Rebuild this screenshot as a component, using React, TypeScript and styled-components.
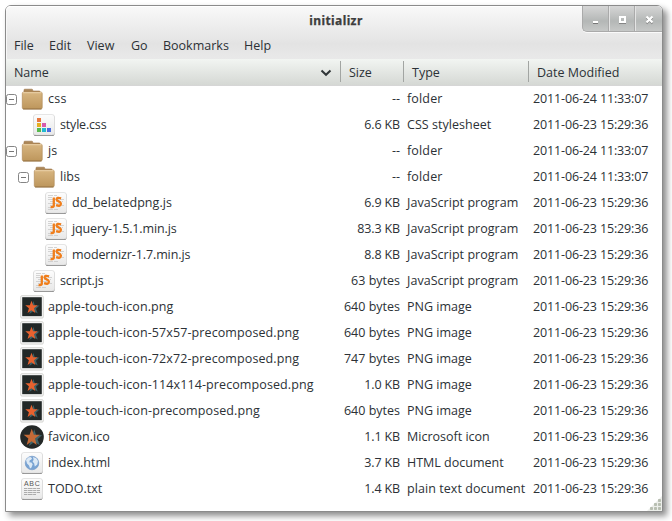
import React from 'react';
import styled, { createGlobalStyle } from 'styled-components';

const Global = createGlobalStyle`
  * { box-sizing: border-box; }
  html, body { margin: 0; background: #fff; }
  body { font: 12.5px/26px "Open Sans", "Noto Sans", sans-serif; color: #2c3136; overflow: hidden; }
`;
const Desktop = styled.main`
  width: 672px; height: 521px; padding: 5px;
`;
const Window = styled.section`
  width: 658px; height: 507px; position: relative; overflow: visible;
  border: 1px solid #8b8b8b; border-radius: 6px 6px 0 0; background: #fff;
  display: flex; flex-direction: column;
  box-shadow: 4px 4px 6px rgba(0,0,0,.45);
`;
const Chrome = styled.header`
  height: 53px; border-radius: 5px 5px 0 0;
  background: linear-gradient(#f9f9f9, #e3e3e3 38px, #e9e9e9);
  box-shadow: inset 0 1px #fff, inset 1px 0 #f7f7f7;
`;
const TitleBar = styled.div`
  height: 27px; display: grid; grid-template-columns: 80px 1fr 80px;
`;
const Title = styled.h1`
  grid-column: 2; margin: 0; text-align: center; font: 700 12px/29px "Noto Sans", sans-serif;
  color: #3d3d3d; -webkit-text-stroke: .25px #3d3d3d; letter-spacing: .4px; padding-left: 4px;
`;
const Controls = styled.div`
  width: 80px; height: 26px; display: flex; justify-self: end;
  border: 1px solid #aaa; border-width: 0 0 1px 1px; border-radius: 0 5px 0 5px; overflow: hidden;
  background: linear-gradient(#d6d6d6, #b4b7b6 60%, #c6c8c7); box-shadow: 0 1px #fafafa;
`;
const Control = styled.button`
  flex: 1; border: 0; border-right: 1px solid #e4e4e4; box-shadow: inset -1px 0 #aaa; background: none; padding: 2px 0 0; display: grid; place-items: center;
  &:last-child { border: 0; box-shadow: none; }
`;
const Menu = styled.nav`
  height: 26px; display: grid; grid-template-columns: 35px 38px 44px 32px 81px auto; justify-content: start; padding-left: 8px;
`;
const Label = styled.span<{ $track?: number }>`
  letter-spacing: ${p => p.$track ?? 0}px; white-space: nowrap;
`;
const Columns = styled.div`
  height: 27px; flex: none; display: grid; grid-template-columns: 335px 63px 125px 1fr;
  background: linear-gradient(#f2f5f2, #d5d8d4); line-height: 28px; border-bottom: 1px solid #d6d6d6;
`;
const Column = styled.div`
  display: flex; justify-content: space-between; align-items: center; padding: 0 9px 0 8px;
  background: linear-gradient(#a2a5a2, #a2a5a2) right 0 top 2px / 1px 21px no-repeat;
  &:last-child { background: none; }
`;
const Rows = styled.div``;
const Row = styled.div`
  height: 26px; display: grid; grid-template-columns: 336px 58px 126px 1fr; align-items: center;
`;
const NameCell = styled.div<{ $depth: number }>`
  display: flex; align-items: center; padding-left: ${p => p.$depth * 12}px;
`;
const Toggle = styled.span`
  width: 11px; height: 26px; display: grid; place-items: center; margin-right: 3px; flex: none;
`;
const IconBox = styled.span`
  width: 24px; height: 26px; display: grid; place-items: center; margin-right: 4px; flex: none;
`;
const Cell = styled.div<{ $right?: boolean; $track?: number }>`
  text-align: ${p => (p.$right ? 'right' : 'left')}; padding-left: ${p => (p.$right ? 0 : 7)}px; white-space: nowrap;
  letter-spacing: ${p => p.$track ?? 0}px;
`;
const Grip = styled.svg`
  position: absolute; right: 0; bottom: 0;
`;

type Kind = 'folder' | 'css' | 'js' | 'png' | 'ico' | 'html' | 'txt';

const Paper = () => (
  <>
    <rect x="1.5" y="2" width="21" height="21" rx="2.5" fill="#6b6b6b" />
    <rect x="1.5" y="1.5" width="21" height="20.5" rx="2.5" fill="url(#paper)" stroke="#dedede" strokeWidth=".8" />
  </>
);
const Star = ({ fill }: { fill: string }) => (
  <>
    <path d="M13.4 6l1.5 4.7 4.6-.3-3.5 3.3 1.7 4.7-4.2-2.5-4.2 3 1.5-5z" fill="#3e6268" />
    <path d="M11.5 5.7l1.6 4.5h4.7l-3.8 3 1.3 4.9-3.9-2.9-3.8 2.9 1.3-4.9-3.6-3h4.5z" fill={fill} />
  </>
);

const FileIcon = ({ kind }: { kind: Kind }) => (
  <svg width="24" height="24" viewBox="0 0 24 24">
    {kind === 'folder' && <>
      <path d="M4 6V3q0-.8.8-.8h7q.9 0 .9 1l.2.8h6.3q.9 0 .9 1v2H4z" fill="#ab8657" stroke="#9a7447" strokeWidth=".6" />
      <rect x="2.3" y="5" width="19.9" height="17" rx="1.5" fill="url(#folder)" stroke="#b18b58" strokeWidth=".7" />
      <path d="M3 5.7h18.5" stroke="#ecd3aa" />
      <path d="M3 22h18.5" stroke="#8b6a3e" strokeWidth=".8" />
    </>}
    {kind === 'css' && <><Paper />
      <rect x="5" y="5" width="4" height="4" fill="#e67840" />
      <rect x="5" y="10" width="4" height="4" fill="#e6ae20" />
      <rect x="10" y="10" width="4" height="4" fill="#d65bad" />
      <rect x="5" y="15" width="4" height="4" fill="#56b94d" />
      <rect x="10" y="15" width="4" height="4" fill="#22b9cf" />
      <rect x="15" y="15" width="4" height="4" fill="#4a6bdd" />
    </>}
    {kind === 'js' && <><Paper />
      <path d="M4 4.5h9M4 6.5h4M4 8.5h16M6 10.5h13M4 12.5h14M6 14.5h14M4 16.5h5M4 18.5h10" stroke="#c9c9c9" strokeWidth=".8" strokeDasharray="5 1" />
      <path d="M9.8 6.5v8.1q0 1.6-1.9 1.6l-1.3-.2M17.1 7.4q-4.7-1.5-4.5 1.2c.2 2 4.4 1.5 4.300 4.100q-.1 3.100-4.800 1.500" fill="none" stroke="#f07e1b" strokeWidth="2.300" />
    </>}
    {kind === 'png' && <>
      <rect x=".8" y=".8" width="22.400" height="22.200" rx="1" fill="#fff" stroke="#cfcfcb" />
      <rect x="2.200" y="2.200" width="19.600" height="19" fill="#222827" />
      <Star fill="#e7622f" />
    </>}
    {kind === 'ico' && <>
      <circle cx="12" cy="12" r="11.800" fill="#242827" />
      <g transform="translate(-3.200 -3.600) scale(1.300)"><Star fill="#c36a37" /></g>
    </>}
    {kind === 'html' && <><Paper />
      <circle cx="12" cy="12" r="6.800" fill="#78a3d3" stroke="#6c94c4" strokeWidth=".6" />
      <path d="M6 9l2.200-2.500 2.300-.5 1.600 1.200-1 1.600-1.300.4-.5 2 2.100.3 1.300 1.700-1.200 3.200-1.500 1-1-3-2-1.800zM13 6l3.300 1.200L18 10l-.7 3.400-2.500 2-.7-3.200-1.500-1.400 1-2z" fill="#dce9f5" />
    </>}
    {kind === 'txt' && <><Paper />
      <text x="12.200" y="8.600" textAnchor="middle" fontFamily="Liberation Sans" fontSize="7" letterSpacing=".6" fill="#555">ABC</text>
      <path d="M4 11.500h16M4 13.500h16M4 15.500h16M4 17.500h12" stroke="#999" strokeWidth=".8" strokeDasharray="3 .6 5 .5" />
    </>}
  </svg>
);

interface Entry { name: string; size: string; type: string; date: string; kind: Kind; depth: number; track: number }
const item = (name: string, size: string, type: string, kind: Kind, depth = 0, track = 0): Entry =>
  ({ name, size, type, kind, depth, track, date: kind === 'folder' ? '2011-06-24 11:33:07' : '2011-06-23 15:29:36' });
const entries: Entry[] = [
  item('css', '--', 'folder', 'folder', 0, .3),
  item('style.css', '6.6 KB', 'CSS stylesheet', 'css', 1, -.18),
  item('js', '--', 'folder', 'folder'),
  item('libs', '--', 'folder', 'folder', 1),
  item('dd_belatedpng.js', '6.9 KB', 'JavaScript program', 'js', 2, .05),
  item('jquery-1.5.1.min.js', '83.3 KB', 'JavaScript program', 'js', 2, -.13),
  item('modernizr-1.7.min.js', '8.8 KB', 'JavaScript program', 'js', 2, -.1),
  item('script.js', '63 bytes', 'JavaScript program', 'js', 1, -.13),
  item('apple-touch-icon.png', '640 bytes', 'PNG image', 'png', 0, .1),
  item('apple-touch-icon-57x57-precomposed.png', '640 bytes', 'PNG image', 'png', 0, .1),
  item('apple-touch-icon-72x72-precomposed.png', '747 bytes', 'PNG image', 'png', 0, .1),
  item('apple-touch-icon-114x114-precomposed.png', '1.0 KB', 'PNG image', 'png', 0, .1),
  item('apple-touch-icon-precomposed.png', '640 bytes', 'PNG image', 'png', 0, .12),
  item('favicon.ico', '1.1 KB', 'Microsoft icon', 'ico'),
  item('index.html', '3.7 KB', 'HTML document', 'html'),
  item('TODO.txt', '1.4 KB', 'plain text document', 'txt'),
];
const typeTrack: Record<Kind, number> = { folder: .15, css: .04, js: .04, png: 0, ico: 0, html: 0, txt: .06 };

export default function App() {
  return (
    <Desktop>
      <Global />
      <svg width="0" height="0" style={{ position: 'absolute' }}>
        <defs>
          <linearGradient id="paper" x2="0" y2="1"><stop stopColor="#fdfdfd" /><stop offset="1" stopColor="#e8e8e8" /></linearGradient>
          <linearGradient id="folder" x2="0" y2="1"><stop stopColor="#d8b681" /><stop offset="1" stopColor="#bd965c" /></linearGradient>
        </defs>
      </svg>
      <Window>
        <Chrome>
          <TitleBar>
            <Title>initializr</Title>
            <Controls>
              <Control aria-label="Minimize"><svg width="11" height="11"><path d="M3 9.500h5" stroke="#777" /><path d="M3 8h5" stroke="#fff" strokeWidth="2" /></svg></Control>
              <Control aria-label="Maximize"><svg width="11" height="11"><path d="M2 9.500h7" stroke="#858585" /><rect x="3" y="3" width="5" height="5" fill="none" stroke="#fff" strokeWidth="2" /></svg></Control>
              <Control aria-label="Close"><svg width="11" height="11"><path d="M2.500 3.500l6 6m0-6l-6 6" stroke="#858585" strokeWidth="2" /><path d="M2.500 2.500l6 6m0-6l-6 6" stroke="#fff" strokeWidth="2.200" /></svg></Control>
            </Controls>
          </TitleBar>
          <Menu>{['File', 'Edit', 'View', 'Go', 'Bookmarks', 'Help'].map(m => <Label key={m}>{m}</Label>)}</Menu>
        </Chrome>
        <Columns>
          <Column><Label $track={-.1}>Name</Label><svg width="12" height="8"><path d="M1.500 1.500L6 5.800l4.500-4.300" fill="none" stroke="#303638" strokeWidth="2" /></svg></Column>
          <Column><Label>Size</Label></Column>
          <Column><Label>Type</Label></Column>
          <Column><Label>Date Modified</Label></Column>
        </Columns>
        <Rows>
          {entries.map(e => (
            <Row key={e.name}>
              <NameCell $depth={e.depth}>
                <Toggle>{e.kind === 'folder' && <svg width="11" height="11"><rect x=".5" y=".5" width="10" height="10" rx="2" fill="#fff" stroke="#858585" /><path d="M3 5.500h5" stroke="#777" /></svg>}</Toggle>
                <IconBox><FileIcon kind={e.kind} /></IconBox>
                <Label $track={e.track}>{e.name}</Label>
              </NameCell>
              <Cell $right $track={e.size.endsWith('KB') ? -.15 : 0}>{e.size}</Cell>
              <Cell $track={typeTrack[e.kind]}>{e.type}</Cell>
              <Cell $track={-.14}>{e.date}</Cell>
            </Row>
          ))}
        </Rows>
        <Grip width="15" height="15"><path d="M15 0v15H0z" fill="#eceeea" />
          {[[11, 3], [7, 7], [11, 7], [3, 11], [7, 11], [11, 11]].map(([x, y]) => <rect key={`${x}-${y}`} x={x} y={y} width="3" height="3" rx=".7" fill="#b8beb1" />)}
        </Grip>
      </Window>
    </Desktop>
  );
}
